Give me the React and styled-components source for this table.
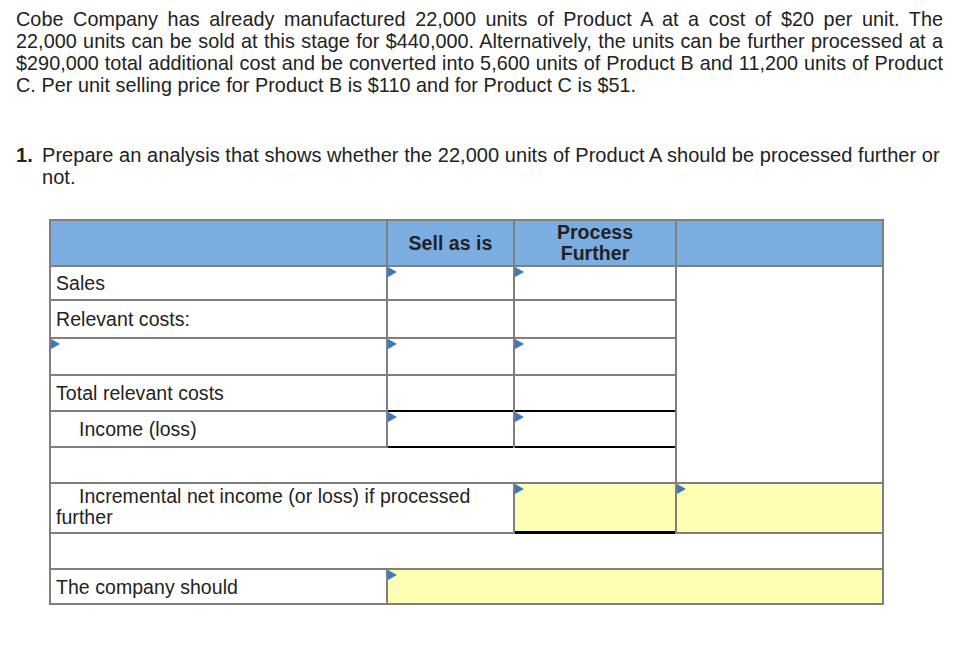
import React from 'react'
import styled, { createGlobalStyle } from 'styled-components'

const GlobalStyle = createGlobalStyle`
  body {
    margin: 0;
    background: #fff;
    font-family: "Liberation Sans", Arial, Helvetica, sans-serif;
    color: #222;
  }
`

const Page = styled.div`
  padding: 8px 23px 40px 16px;
  font-size: 19.8px;
  letter-spacing: 0.05px;
  line-height: 22px;
`

const Problem = styled.div``

const Line = styled.div`
  white-space: nowrap;
  text-align: ${p => (p.$last ? 'left' : 'justify')};
  text-align-last: ${p => (p.$last ? 'left' : 'justify')};
`

const Question = styled.div`
  display: flex;
  margin-top: 48px;
  font-size: 20px;
`

const QNum = styled.span`
  flex: 0 0 26px;
  font-weight: bold;
`

const QText = styled.div`
  flex: 1;
`

const Sheet = styled.div`
  display: grid;
  grid-template-columns: 335px 125px 160px 205px;
  grid-template-rows: 44px 32px 36px 35px 34px 34px 34px 48px 34px 33px;
  gap: 2px;
  padding: 2px;
  width: max-content;
  margin: 31px 0 0 33px;
  background: #7f7f7f;
  font-size: 19.5px;
  letter-spacing: 0.05px;
`

const Head = styled.div`
  display: flex;
  align-items: center;
  justify-content: center;
  text-align: center;
  background: #7badE1;
  font-weight: bold;
  line-height: 21px;
`

const Cell = styled.div`
  position: relative;
  display: flex;
  align-items: center;
  background: ${p => (p.$yellow ? '#ffffb3' : '#fff')};
  grid-column: span ${p => p.$span || 1};
  grid-row: span ${p => p.$rows || 1};
  box-shadow: ${p =>
    p.$ruled
      ? '0 -2px 0 #000, 0 2px 0 #000'
      : p.$heavy
      ? 'inset 0 -1px 0 #000, 0 2px 0 #000'
      : 'none'};

  ${p =>
    p.$arrow &&
    `
    &::before {
      content: '';
      position: absolute;
      left: 0;
      top: 0;
      border-left: 9px solid #3a78c2;
      border-top: 5.5px solid transparent;
      border-bottom: 5.5px solid transparent;
    }
  `}
`

const Label = styled(Cell)`
  padding: 0 6px 0 ${p => (p.$indent ? 28 : 5)}px;
`

const WrapLabel = styled(Cell)`
  display: block;
  padding: 2px 6px 0 5px;
  text-indent: 23px;
  line-height: 21px;
`

const problemLines = [
  'Cobe Company has already manufactured 22,000 units of Product A at a cost of $20 per unit. The',
  '22,000 units can be sold at this stage for $440,000. Alternatively, the units can be further processed at a',
  '$290,000 total additional cost and be converted into 5,600 units of Product B and 11,200 units of Product',
  'C. Per unit selling price for Product B is $110 and for Product C is $51.',
]

export default function App() {
  return (
    <Page>
      <GlobalStyle />
      <Problem>
        {problemLines.map((text, i) => (
          <Line key={i} $last={i === problemLines.length - 1}>
            {text}
          </Line>
        ))}
      </Problem>

      <Question>
        <QNum>1.</QNum>
        <QText>
          <Line $last>
            Prepare an analysis that shows whether the 22,000 units of Product A should be processed further or
          </Line>
          <Line $last>not.</Line>
        </QText>
      </Question>

      <Sheet>
        <Head />
        <Head>Sell as is</Head>
        <Head>
          Process
          <br />
          Further
        </Head>
        <Head />

        <Label>Sales</Label>
        <Cell $arrow />
        <Cell $arrow />
        <Cell $rows={6} />

        <Label>Relevant costs:</Label>
        <Cell />
        <Cell />

        <Cell $arrow />
        <Cell $arrow />
        <Cell $arrow />

        <Label>Total relevant costs</Label>
        <Cell />
        <Cell />

        <Label $indent>Income (loss)</Label>
        <Cell $arrow $ruled />
        <Cell $arrow $ruled />

        <Cell $span={3} />

        <WrapLabel $span={2}>Incremental net income (or loss) if processed further</WrapLabel>
        <Cell $arrow $yellow $heavy />
        <Cell $arrow $yellow />

        <Cell $span={4} />

        <Label>The company should</Label>
        <Cell $arrow $yellow $span={3} />
      </Sheet>
    </Page>
  )
}
